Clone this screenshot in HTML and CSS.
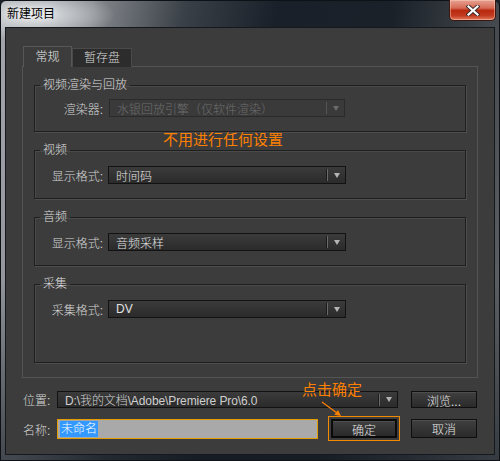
FILE: index.html
```html
<!DOCTYPE html>
<html lang="zh-CN">
<head>
<meta charset="utf-8">
<title>新建项目</title>
<link rel="stylesheet" href="styles.css">
</head>
<body>
<div class="window">
  <div class="titlebar">
    <span class="title">新建项目</span>
    <button class="close" aria-label="关闭">
      <svg width="14" height="11" viewBox="0 0 14 11">
        <path d="M2.5 1.5 L11.5 9.5 M11.5 1.5 L2.5 9.5" stroke="#3a2a2a" stroke-width="4" stroke-linecap="square"/>
        <path d="M2.5 1.5 L11.5 9.5 M11.5 1.5 L2.5 9.5" stroke="#ffffff" stroke-width="2.2" stroke-linecap="square"/>
      </svg>
    </button>
  </div>
  <div class="client">
    <div class="tabs">
      <div class="tab active">常规</div>
      <div class="tab">暂存盘</div>
    </div>
    <div class="panel">
      <fieldset class="group first">
        <legend>视频渲染与回放</legend>
        <div class="row">
          <span class="label">渲染器:</span>
          <div class="select disabled"><span class="value">水银回放引擎（仅软件渲染）</span><span class="arrow"></span></div>
        </div>
      </fieldset>
      <fieldset class="group">
        <legend>视频</legend>
        <div class="row">
          <span class="label">显示格式:</span>
          <div class="select"><span class="value">时间码</span><span class="arrow"></span></div>
        </div>
      </fieldset>
      <fieldset class="group">
        <legend>音频</legend>
        <div class="row">
          <span class="label">显示格式:</span>
          <div class="select"><span class="value">音频采样</span><span class="arrow"></span></div>
        </div>
      </fieldset>
      <fieldset class="group tall">
        <legend>采集</legend>
        <div class="row">
          <span class="label">采集格式:</span>
          <div class="select"><span class="value">DV</span><span class="arrow"></span></div>
        </div>
      </fieldset>
    </div>
    <div class="brow first-row">
      <span class="blabel">位置:</span>
      <div class="select path"><span class="value">D:\我的文档\Adobe\Premiere Pro\6.0</span><span class="arrow"></span></div>
      <button class="btn browse">浏览...</button>
    </div>
    <div class="brow second-row">
      <span class="blabel">名称:</span>
      <div class="input"><span class="sel">未命名</span></div>
      <button class="btn ok">确定</button>
      <button class="btn cancel">取消</button>
    </div>
    <div class="note note-settings">不用进行任何设置</div>
    <div class="note note-ok">点击确定</div>
    <svg class="pointer" width="30" height="24" viewBox="0 0 30 24">
      <line x1="4" y1="4" x2="20" y2="15.8" stroke="#ff8000" stroke-width="1.2"/>
      <polygon points="23,18 16.4,16.8 20,12" fill="#ff8000"/>
    </svg>
  </div>
</div>
</body>
</html>
```
FILE: styles.css
```css
* { box-sizing: border-box; }
html, body { margin: 0; padding: 0; }
body {
  width: 500px;
  height: 461px;
  overflow: hidden;
  font-family: "Liberation Sans", "Noto Sans CJK SC", sans-serif;
  font-size: 12px;
  font-weight: 300;
  background: #1b2129;
}
.window {
  width: 500px;
  height: 461px;
  display: flex;
  flex-direction: column;
  border: 1px solid #0e1216;
  border-radius: 6px 6px 0 0;
  background:
    radial-gradient(ellipse 80px 26px at 34px 14px, rgba(236,238,240,0.95), rgba(236,238,240,0) 100%),
    linear-gradient(to bottom, rgba(0,0,0,0) 0%, rgba(0,0,0,0) 60%, rgba(20,26,34,0.6) 100%),
    linear-gradient(100deg, #a4a8ac 0%, #868a8f 16%, #3a4047 32%, #1a2029 48%, #1b2129 68%, #3a3f45 82%, #6a6e72 100%);
}
.titlebar {
  flex: none;
  height: 27px;
  display: flex;
  align-items: flex-start;
  padding-left: 6px;
}
.title {
  line-height: 26px;
  color: #000;
  font-weight: 400;
  text-shadow: 0 0 6px rgba(255,255,255,0.9);
}
.close {
  margin: -1px 3px 0 auto;
  width: 47px;
  height: 21px;
  padding: 0;
  border: 1px solid #3b1510;
  border-top: none;
  border-radius: 0 0 5px 5px;
  background: linear-gradient(#e6a292 0%, #d66a55 40%, #b8290f 52%, #c23a20 78%, #e27d5c 100%);
  box-shadow: inset 0 0 0 1px rgba(255,215,200,0.45);
  display: flex;
  align-items: center;
  justify-content: center;
}
.close svg { display: block; }
.client {
  position: relative;
  flex: none;
  height: 426px;
  margin: 0 5px;
  background: #3c3c3c;
  box-shadow: 0 0 0 1px #15191e;
  padding: 18px 16px 0 16px;
  display: flex;
  flex-direction: column;
  color: #d6d6d6;
}
.tabs {
  display: flex;
  align-items: flex-end;
  height: 21px;
  padding-left: 1px;
  margin-bottom: -1px;
  position: relative;
  z-index: 1;
}
.tab {
  width: 60px;
  height: 19px;
  border: 1px solid #4a4a4a;
  border-bottom: none;
  background: #2c2c2c;
  color: #d8d8d8;
  text-align: center;
  line-height: 18px;
}
.tab.active {
  width: 49px;
  height: 21px;
  background: #3c3c3c;
  border-color: #575757;
  line-height: 20px;
  color: #e6e6e6;
}
.panel {
  height: 312px;
  border: 1px solid #545454;
  padding: 11px 11px 0 11px;
  display: flex;
  flex-direction: column;
  gap: 11px;
}
.group {
  margin: 0;
  padding: 0 0 14px 0;
  min-width: 0;
  border: 1px solid #1f1f1f;
  box-shadow: 1px 1px 0 #4d4d4d, inset 1px 1px 0 #4a4a4a;
}
.group.tall { padding-bottom: 44px; }
.group legend {
  padding: 0 3px;
  margin-left: 5px;
  line-height: 14px;
  color: #dcdcdc;
}
.row {
  display: flex;
  align-items: center;
  height: 18px;
  margin-top: 9px;
}
.group.first .row { margin-top: 7px; }
.label {
  width: 73px;
  padding-right: 5px;
  text-align: right;
  color: #d4d4d4;
}
.group.first .label { width: 74px; padding-right: 6px; }
.select {
  width: 238px;
  height: 18px;
  border: 1px solid #121212;
  background: linear-gradient(#3b3b3b, #2b2b2b);
  display: flex;
  align-items: center;
  padding-left: 7px;
  color: #e2e2e2;
}
.select .value { flex: 1; white-space: nowrap; overflow: hidden; }
.select .arrow {
  flex: none;
  width: 18px;
  height: 12px;
  border-left: 1px solid #6a6a6a;
  box-shadow: -1px 0 0 #1a1a1a;
  display: flex;
  align-items: center;
  justify-content: center;
}
.select .arrow::after {
  content: "";
  border-top: 5px solid #b4b4b4;
  border-left: 3.5px solid transparent;
  border-right: 3.5px solid transparent;
}
.select.disabled {
  width: 236px;
  background: #3a3a3a;
  border-color: #2a2a2a;
  color: #6e6e6e;
}
.select.disabled .arrow { border-left-color: #555; box-shadow: none; }
.select.disabled .arrow::after { border-top-color: #6a6a6a; }
.brow {
  display: flex;
  align-items: flex-start;
  padding-left: 1px;
}
.first-row { margin-top: 13px; height: 17px; align-items: center; }
.second-row { margin-top: 11px; height: 20px; }
.blabel {
  width: 34px;
  color: #d4d4d4;
  align-self: center;
}
.select.path {
  width: 341px;
  height: 17px;
  color: #cfcfcf;
  letter-spacing: -0.1px;
}
.btn {
  width: 66px;
  height: 19px;
  padding: 0;
  font: inherit;
  color: #e2e2e2;
  background: linear-gradient(#404040, #2a2a2a);
  border: 1px solid #0f0f0f;
  box-shadow: inset 0 1px 0 #4e4e4e;
}
.btn.browse { margin-left: 13px; height: 17px; }
.btn.ok {
  margin-left: 13px;
  border: 2px solid #0a0a0a;
  outline: 1px solid #f28a00;
  outline-offset: 2px;
}
.btn.cancel { margin-left: 14px; }
.input {
  width: 261px;
  height: 20px;
  border: 1px solid #e29c00;
  background: #a9a9a9;
  padding: 1px 0 0 2px;
  line-height: 16px;
}
.input .sel {
  display: inline-block;
  background: #3399ff;
  color: #fff;
  padding: 0 1px;
}
.note {
  position: absolute;
  color: #ff8000;
  font-size: 15px;
  font-weight: 400;
  line-height: 17px;
}
.note-settings { left: 157px; top: 103px; }
.note-ok { left: 296px; top: 353px; }
.pointer {
  position: absolute;
  left: 312px;
  top: 370px;
}
```
